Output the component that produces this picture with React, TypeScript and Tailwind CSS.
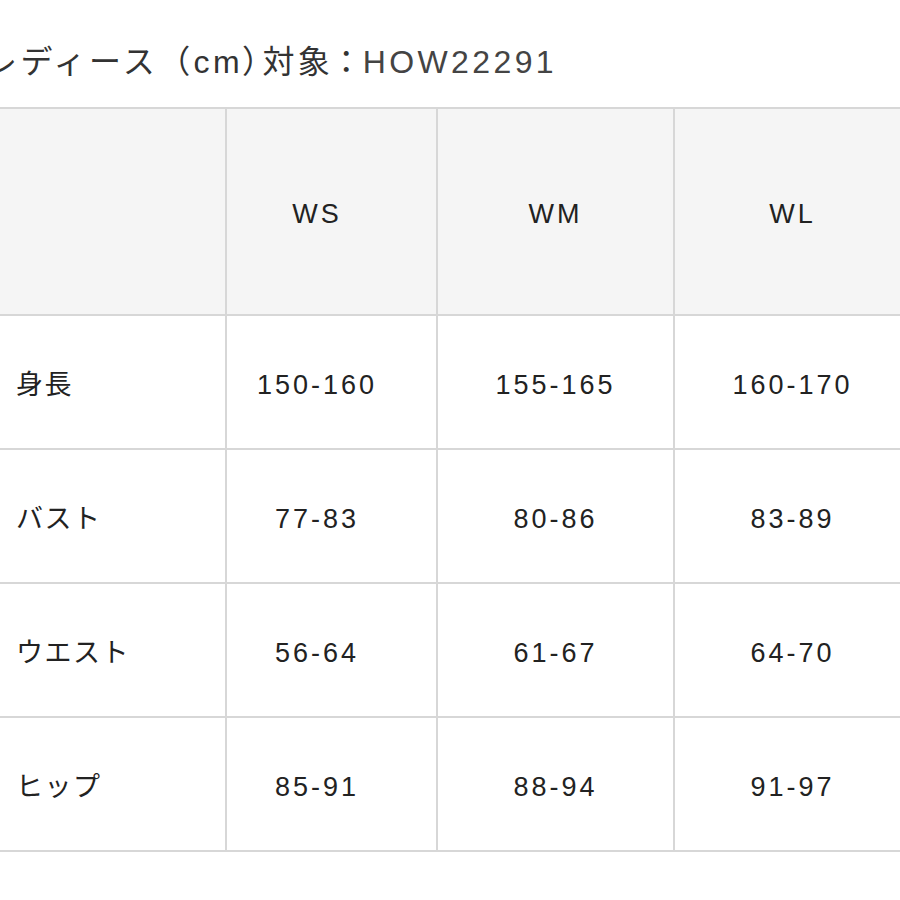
const rows = [
  { label: "身長", values: ["150-160", "155-165", "160-170"] },
  { label: "バスト", values: ["77-83", "80-86", "83-89"] },
  { label: "ウエスト", values: ["56-64", "61-67", "64-70"] },
  { label: "ヒップ", values: ["85-91", "88-94", "91-97"] },
];

const sizes = ["WS", "WM", "WL"];

export default function App() {
  return (
    <div className="w-[900px] h-[900px] bg-white overflow-hidden font-['Liberation_Sans','Noto_Sans_CJK_JP',sans-serif]">
      {/* title, cut off at the left like the screenshot */}
      <div className="-ml-[15px] pt-[42px] h-[107px]">
        <h2 className="h-[40px] flex items-center text-[32px] leading-none tracking-[3.4px] text-[#333] whitespace-nowrap">
          レディース（cm<span className="[font-feature-settings:'palt']">）</span>対象
          <span className="mx-[5px] [font-feature-settings:'palt']">：</span>
          <span className="text-[#444]">HOW22291</span>
        </h2>
      </div>

      {/* size table */}
      <div className="w-[910px] grid grid-cols-[225px_209px_235px_235px] gap-[2px] bg-[#d7d7d7] border-y-2 border-[#d7d7d7] text-[27px] tracking-[3px] text-[#222]">
        <div className="h-[205px] bg-[#f5f5f5]" />
        {sizes.map((s, i) => (
          <div
            key={s}
            className={`h-[205px] bg-[#f5f5f5] flex items-center justify-center pt-[6px] ${i === 0 ? "pr-[29px]" : ""}`}
          >
            {s}
          </div>
        ))}

        {rows.map((r) => (
          <Row key={r.label} label={r.label} values={r.values} />
        ))}
      </div>
    </div>
  );
}

function Row({ label, values }: { label: string; values: string[] }) {
  return (
    <>
      <div className="h-[132px] bg-white flex items-center pl-[16px] pt-[7px] tracking-[1.5px]">
        {label}
      </div>
      {values.map((v, i) => (
        <div
          key={i}
          className={`h-[132px] bg-white flex items-center justify-center pt-[6px] ${i === 0 ? "pr-[29px]" : ""}`}
        >
          {v}
        </div>
      ))}
    </>
  );
}
